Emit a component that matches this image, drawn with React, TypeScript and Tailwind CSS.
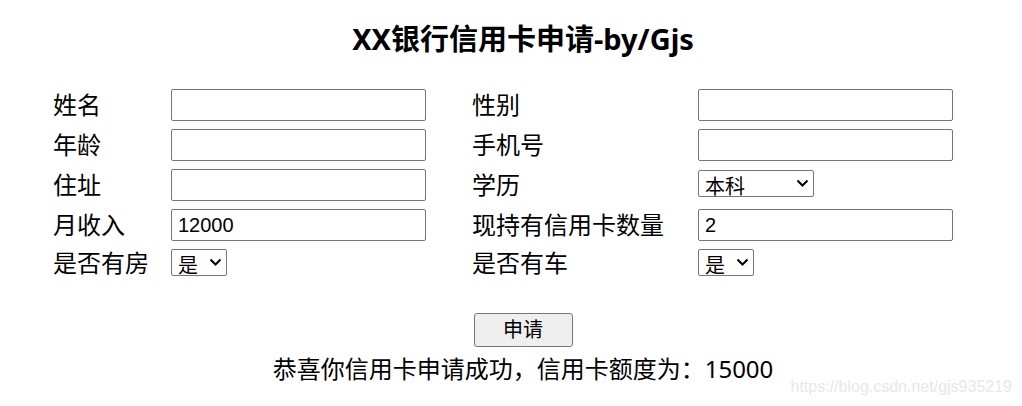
import React from "react";

const cjk = "font-['Noto_Sans','Noto_Sans_CJK_SC',sans-serif]";

function TextBox({ value = "" }: { value?: string }) {
  return (
    <input
      type="text"
      defaultValue={value}
      className="w-[255px] h-[32px] border border-[#767676] rounded-[2px] px-[6px] text-[20px] text-black font-['Liberation_Sans',sans-serif] outline-none bg-white"
    />
  );
}

function Chevron() {
  return (
    <svg width="13" height="8" viewBox="0 0 13 8" className="absolute top-[9px] right-[5px] pointer-events-none">
      <path d="M1.5 1.5 L6.5 6.5 L11.5 1.5" fill="none" stroke="#000" strokeWidth="2" />
    </svg>
  );
}

function Select({ options, width }: { options: string[]; width: string }) {
  return (
    <div className={`relative ${width} h-[27px]`}>
      <select
        className={`appearance-none w-full h-full border border-[#767676] rounded-[2px] pl-[6px] pt-[4px] text-[20px] leading-[24px] text-black bg-white outline-none overflow-hidden ${cjk}`}
      >
        {options.map((o) => (
          <option key={o}>{o}</option>
        ))}
      </select>
      <Chevron />
    </div>
  );
}

function Label({ children }: { children: React.ReactNode }) {
  return <span className={`text-[24px] leading-[30px] text-black whitespace-nowrap ${cjk}`}>{children}</span>;
}

export default function App() {
  return (
    <div className="relative w-[1022px] h-[406px] bg-white overflow-hidden">
      <div className="pl-[24px]">
        <h1 className={`pt-[21px] text-center text-[29px] leading-[36px] font-bold text-black ${cjk}`}>
          XX银行信用卡申请-by/Gjs
        </h1>
      </div>

      <div className="mt-[32px] pl-[53px] grid grid-cols-[118px_301px_226px_255px] grid-rows-[32px_32px_32px_32px_27px] gap-y-[8px] items-center justify-items-start">
        <Label>姓名</Label>
        <TextBox />
        <Label>性别</Label>
        <TextBox />

        <Label>年龄</Label>
        <TextBox />
        <Label>手机号</Label>
        <TextBox />

        <Label>住址</Label>
        <TextBox />
        <Label>学历</Label>
        <div className="self-start mt-[1px]">
          <Select options={["本科", "专科", "硕士", "博士"]} width="w-[116px]" />
        </div>

        <Label>月收入</Label>
        <TextBox value="12000" />
        <Label>现持有信用卡数量</Label>
        <TextBox value="2" />

        <Label>是否有房</Label>
        <Select options={["是", "否"]} width="w-[56px]" />
        <Label>是否有车</Label>
        <Select options={["是", "否"]} width="w-[56px]" />
      </div>

      <div className="mt-[37px] pl-[24px] flex flex-col items-center">
        <button
          className={`w-[99px] h-[34px] bg-[#efefef] border border-[#767676] rounded-[3px] text-[20px] leading-[24px] text-black ${cjk}`}
        >
          申请
        </button>
        <p className={`mt-[7px] text-[24px] leading-[30px] text-black ${cjk}`}>
          恭喜你信用卡申请成功，信用卡额度为：15000
        </p>
      </div>

      <span className="absolute right-[10px] bottom-[9px] text-[16px] leading-[20px] text-[#e8e8e8] font-['Liberation_Sans',sans-serif]">
        https://blog.csdn.net/gjs935219
      </span>
    </div>
  );
}
